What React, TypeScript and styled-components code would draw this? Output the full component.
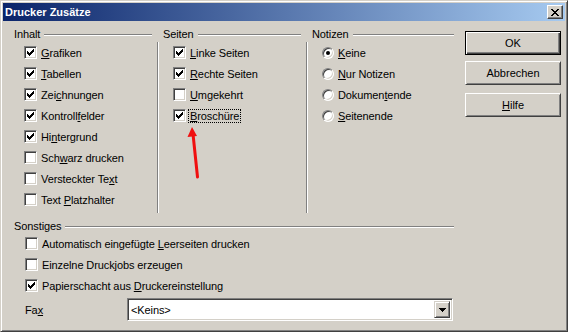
import React from 'react';
import styled, { createGlobalStyle } from 'styled-components';

const face = '#D4D0C8';
const shadow = '#808080';
const dark = '#404040';
const hi = '#FFFFFF';

const Global = createGlobalStyle`
  html, body { margin: 0; padding: 0; background: ${face}; }
  body {
    font-family: "Liberation Sans", Arial, sans-serif;
    font-size: 11px;
    letter-spacing: -0.1px;
    color: #000;
  }
`;

const Window = styled.div`
  position: relative;
  width: 568px;
  height: 332px;
  box-sizing: border-box;
  background: ${face};
  border: 1px solid;
  border-color: ${face} ${dark} ${dark} ${face};
  box-shadow: inset 1px 1px ${hi}, inset -1px -1px ${shadow};
  padding: 2px;
  display: flex;
  flex-direction: column;
`;

const TitleBar = styled.div`
  height: 18px;
  flex: none;
  display: flex;
  align-items: center;
  justify-content: space-between;
  padding: 0 2px;
  background: linear-gradient(to right, #0a246a, #a6caf0);
`;

const TitleText = styled.span`
  color: #fff;
  font-weight: bold;
  font-size: 11px;
  letter-spacing: 0;
  line-height: 18px;
`;

const CloseButton = styled.div`
  width: 16px;
  height: 14px;
  box-sizing: border-box;
  background: ${face};
  border: 1px solid;
  border-color: ${hi} ${dark} ${dark} ${hi};
  box-shadow: inset -1px -1px ${shadow};
  display: flex;
  align-items: center;
  justify-content: center;
`;

const Body = styled.div`
  flex: 1;
  display: flex;
  padding: 7px 0 0 5px;
`;

const Main = styled.div`
  width: 447px;
  display: flex;
  flex-direction: column;
`;

const TopGroups = styled.div`
  display: grid;
  grid-template-columns: 149px 149px 149px;
`;

const Column = styled.div`
  display: flex;
  flex-direction: column;
`;

const Header = styled.div<{ $right?: number }>`
  height: 13px;
  display: flex;
  align-items: center;
  gap: 4px;
  padding: 0 ${(p) => (p.$right ?? 5)}px 0 6px;
`;

const HeaderText = styled.span`
  line-height: 13px;
  white-space: nowrap;
`;

const FixedLine = styled.div`
  flex: 1;
  height: 0;
  border-top: 1px solid ${shadow};
  border-bottom: 1px solid ${hi};
`;

const Items = styled.div<{ $sep?: boolean; $indent: number }>`
  flex: 1;
  margin-top: 1px;
  padding: 2px 0 5px ${(p) => p.$indent}px;
  display: flex;
  flex-direction: column;
  gap: 4px;
  ${(p) =>
    p.$sep
      ? `border-left: 1px solid ${shadow}; box-shadow: inset 1px 0 ${hi};`
      : ''}
`;

const Row = styled.div`
  height: 17px;
  display: flex;
  align-items: center;
  gap: 3px;
  white-space: nowrap;
`;

const Box = styled.span`
  width: 13px;
  height: 13px;
  flex: none;
  box-sizing: border-box;
  background: #fff;
  border: 1px solid;
  border-color: ${shadow} ${hi} ${hi} ${shadow};
  box-shadow: inset 1px 1px ${dark}, inset -1px -1px ${face};
  display: flex;
  align-items: center;
  justify-content: center;
`;

const Radio = styled.span`
  width: 12px;
  height: 12px;
  flex: none;
  box-sizing: border-box;
  border-radius: 50%;
  background: #fff;
  border: 1px solid;
  border-color: ${shadow} ${hi} ${hi} ${shadow};
  box-shadow: inset 1px 1px ${dark}, inset -1px -1px ${face};
  display: flex;
  align-items: center;
  justify-content: center;
`;

const Dot = styled.span`
  width: 4px;
  height: 4px;
  border-radius: 50%;
  background: #000;
`;

const ItemText = styled.span<{ $focus?: boolean }>`
  padding: 0 1px;
  line-height: 12px;
  ${(p) => (p.$focus ? 'outline: 1px dotted #000;' : '')}
`;

const Key = styled.span`
  text-decoration: underline;
  text-underline-offset: 1px;
`;

const Section = styled.div`
  margin-top: 7px;
  display: flex;
  flex-direction: column;
`;

const SectionItems = styled.div`
  margin-top: 2px;
  padding-left: 17px;
  display: flex;
  flex-direction: column;
  gap: 4px;
`;

const FaxRow = styled.div`
  margin-top: 4px;
  height: 23px;
  display: flex;
  align-items: center;
  padding-left: 17px;
`;

const FaxLabel = styled.span`
  width: 102px;
  flex: none;
`;

const Combo = styled.div`
  width: 326px;
  height: 23px;
  box-sizing: border-box;
  background: #fff;
  border: 1px solid;
  border-color: ${shadow} ${hi} ${hi} ${shadow};
  box-shadow: inset 1px 1px ${dark}, inset -1px -1px ${face};
  padding: 2px;
  display: flex;
  align-items: center;
`;

const ComboText = styled.span`
  flex: 1;
  padding-left: 1px;
`;

const DropButton = styled.div`
  width: 16px;
  height: 17px;
  box-sizing: border-box;
  background: ${face};
  border: 1px solid;
  border-color: ${face} ${dark} ${dark} ${face};
  box-shadow: inset 1px 1px ${hi}, inset -1px -1px ${shadow};
  display: flex;
  align-items: center;
  justify-content: center;
`;

const ButtonColumn = styled.div`
  width: 96px;
  margin-left: 10px;
  padding-top: 3px;
  display: flex;
  flex-direction: column;
`;

const Button = styled.button<{ $default?: boolean; $gap: number }>`
  width: 96px;
  height: 24px;
  margin: ${(p) => p.$gap}px 0 0 0;
  padding: 0;
  box-sizing: border-box;
  font: inherit;
  color: #000;
  background: ${face};
  border: 1px solid;
  ${(p) =>
    p.$default
      ? `border-color: #000;
         box-shadow: inset 1px 1px ${hi}, inset -1px -1px ${dark}, inset -2px -2px ${shadow};`
      : `border-color: ${hi} ${dark} ${dark} ${hi};
         box-shadow: inset 1px 1px ${face}, inset -1px -1px ${shadow};`}
`;

const Arrow = styled.svg`
  position: absolute;
  left: 183px;
  top: 121px;
  overflow: visible;
`;

const CheckMark = () => (
  <svg width="7" height="7" viewBox="0 0 7 7" shapeRendering="crispEdges">
    {[2, 3, 4, 3, 2, 1, 0].map((y, x) => (
      <rect key={x} x={x} y={y} width="1" height="3" fill="#000" />
    ))}
  </svg>
);

const CloseGlyph = () => (
  <svg width="8" height="7" viewBox="0 0 8 7" shapeRendering="crispEdges">
    {[
      [0, 0, 2], [6, 0, 2],
      [1, 1, 2], [5, 1, 2],
      [2, 2, 4],
      [3, 3, 2],
      [2, 4, 4],
      [1, 5, 2], [5, 5, 2],
      [0, 6, 2], [6, 6, 2],
    ].map(([x, y, w], i) => (
      <rect key={i} x={x} y={y} width={w} height="1" fill="#000" />
    ))}
  </svg>
);

const DownGlyph = () => (
  <svg width="7" height="4" viewBox="0 0 7 4" shapeRendering="crispEdges">
    {[0, 1, 2, 3].map((r) => (
      <rect key={r} x={r} y={r} width={7 - 2 * r} height="1" fill="#000" />
    ))}
  </svg>
);

type Lbl = { pre?: string; k: string; post?: string };

const Text = ({ pre = '', k, post = '' }: Lbl) => (
  <>
    {pre}
    <Key>{k}</Key>
    {post}
  </>
);

const CheckItem = ({ label, checked, focus }: { label: Lbl; checked?: boolean; focus?: boolean }) => (
  <Row>
    <Box>{checked && <CheckMark />}</Box>
    <ItemText $focus={focus}>
      <Text {...label} />
    </ItemText>
  </Row>
);

const RadioItem = ({ label, selected }: { label: Lbl; selected?: boolean }) => (
  <Row>
    <Radio>{selected && <Dot />}</Radio>
    <ItemText>
      <Text {...label} />
    </ItemText>
  </Row>
);

const inhalt: { label: Lbl; checked: boolean }[] = [
  { label: { k: 'G', post: 'rafiken' }, checked: true },
  { label: { k: 'T', post: 'abellen' }, checked: true },
  { label: { pre: 'Zei', k: 'c', post: 'hnungen' }, checked: true },
  { label: { pre: 'Kontroll', k: 'f', post: 'elder' }, checked: true },
  { label: { pre: 'Hi', k: 'n', post: 'tergrund' }, checked: true },
  { label: { pre: 'Sch', k: 'w', post: 'arz drucken' }, checked: false },
  { label: { pre: 'Versteckter Te', k: 'x', post: 't' }, checked: false },
  { label: { pre: 'Text ', k: 'P', post: 'latzhalter' }, checked: false },
];

const seiten: { label: Lbl; checked: boolean; focus?: boolean }[] = [
  { label: { k: 'L', post: 'inke Seiten' }, checked: true },
  { label: { k: 'R', post: 'echte Seiten' }, checked: true },
  { label: { k: 'U', post: 'mgekehrt' }, checked: false },
  { label: { k: 'B', post: 'roschüre' }, checked: true, focus: true },
];

const notizen: { label: Lbl; selected: boolean }[] = [
  { label: { k: 'K', post: 'eine' }, selected: true },
  { label: { k: 'N', post: 'ur Notizen' }, selected: false },
  { label: { pre: 'Dokumen', k: 't', post: 'ende' }, selected: false },
  { label: { k: 'S', post: 'eitenende' }, selected: false },
];

const sonstiges: { label: Lbl; checked: boolean }[] = [
  { label: { pre: 'Automatisch eingefügte ', k: 'L', post: 'eerseiten drucken' }, checked: false },
  { label: { pre: 'Einzelne Druck', k: 'j', post: 'obs erzeugen' }, checked: false },
  { label: { pre: 'Papierschacht aus ', k: 'D', post: 'ruckereinstellung' }, checked: true },
];

export default function App() {
  return (
    <>
      <Global />
      <Window>
        <TitleBar>
          <TitleText>Drucker Zusätze</TitleText>
          <CloseButton>
            <CloseGlyph />
          </CloseButton>
        </TitleBar>
        <Body>
          <Main>
            <TopGroups>
              <Column>
                <Header>
                  <HeaderText>Inhalt</HeaderText>
                  <FixedLine />
                </Header>
                <Items $indent={16}>
                  {inhalt.map((it, i) => (
                    <CheckItem key={i} label={it.label} checked={it.checked} />
                  ))}
                </Items>
              </Column>
              <Column>
                <Header>
                  <HeaderText>Seiten</HeaderText>
                  <FixedLine />
                </Header>
                <Items $sep $indent={15}>
                  {seiten.map((it, i) => (
                    <CheckItem key={i} label={it.label} checked={it.checked} focus={it.focus} />
                  ))}
                </Items>
              </Column>
              <Column>
                <Header $right={1}>
                  <HeaderText>Notizen</HeaderText>
                  <FixedLine />
                </Header>
                <Items $sep $indent={15}>
                  {notizen.map((it, i) => (
                    <RadioItem key={i} label={it.label} selected={it.selected} />
                  ))}
                </Items>
              </Column>
            </TopGroups>
            <Section>
              <Header $right={1}>
                <HeaderText>Sonstiges</HeaderText>
                <FixedLine />
              </Header>
              <SectionItems>
                {sonstiges.map((it, i) => (
                  <CheckItem key={i} label={it.label} checked={it.checked} />
                ))}
              </SectionItems>
              <FaxRow>
                <FaxLabel>
                  <Text pre="Fa" k="x" />
                </FaxLabel>
                <Combo>
                  <ComboText>&lt;Keins&gt;</ComboText>
                  <DropButton>
                    <DownGlyph />
                  </DropButton>
                </Combo>
              </FaxRow>
            </Section>
          </Main>
          <ButtonColumn>
            <Button $default $gap={0}>OK</Button>
            <Button $gap={6}>Abbrechen</Button>
            <Button $gap={8}>
              <Key>H</Key>ilfe
            </Button>
          </ButtonColumn>
        </Body>
        <Arrow width="16" height="58" viewBox="0 0 16 58">
          <line x1="13.5" y1="55" x2="9" y2="12" stroke="#f01010" strokeWidth="3" strokeLinecap="round" />
          <polygon points="8,5 3.5,15 13,14" fill="#f01010" />
        </Arrow>
      </Window>
    </>
  );
}
